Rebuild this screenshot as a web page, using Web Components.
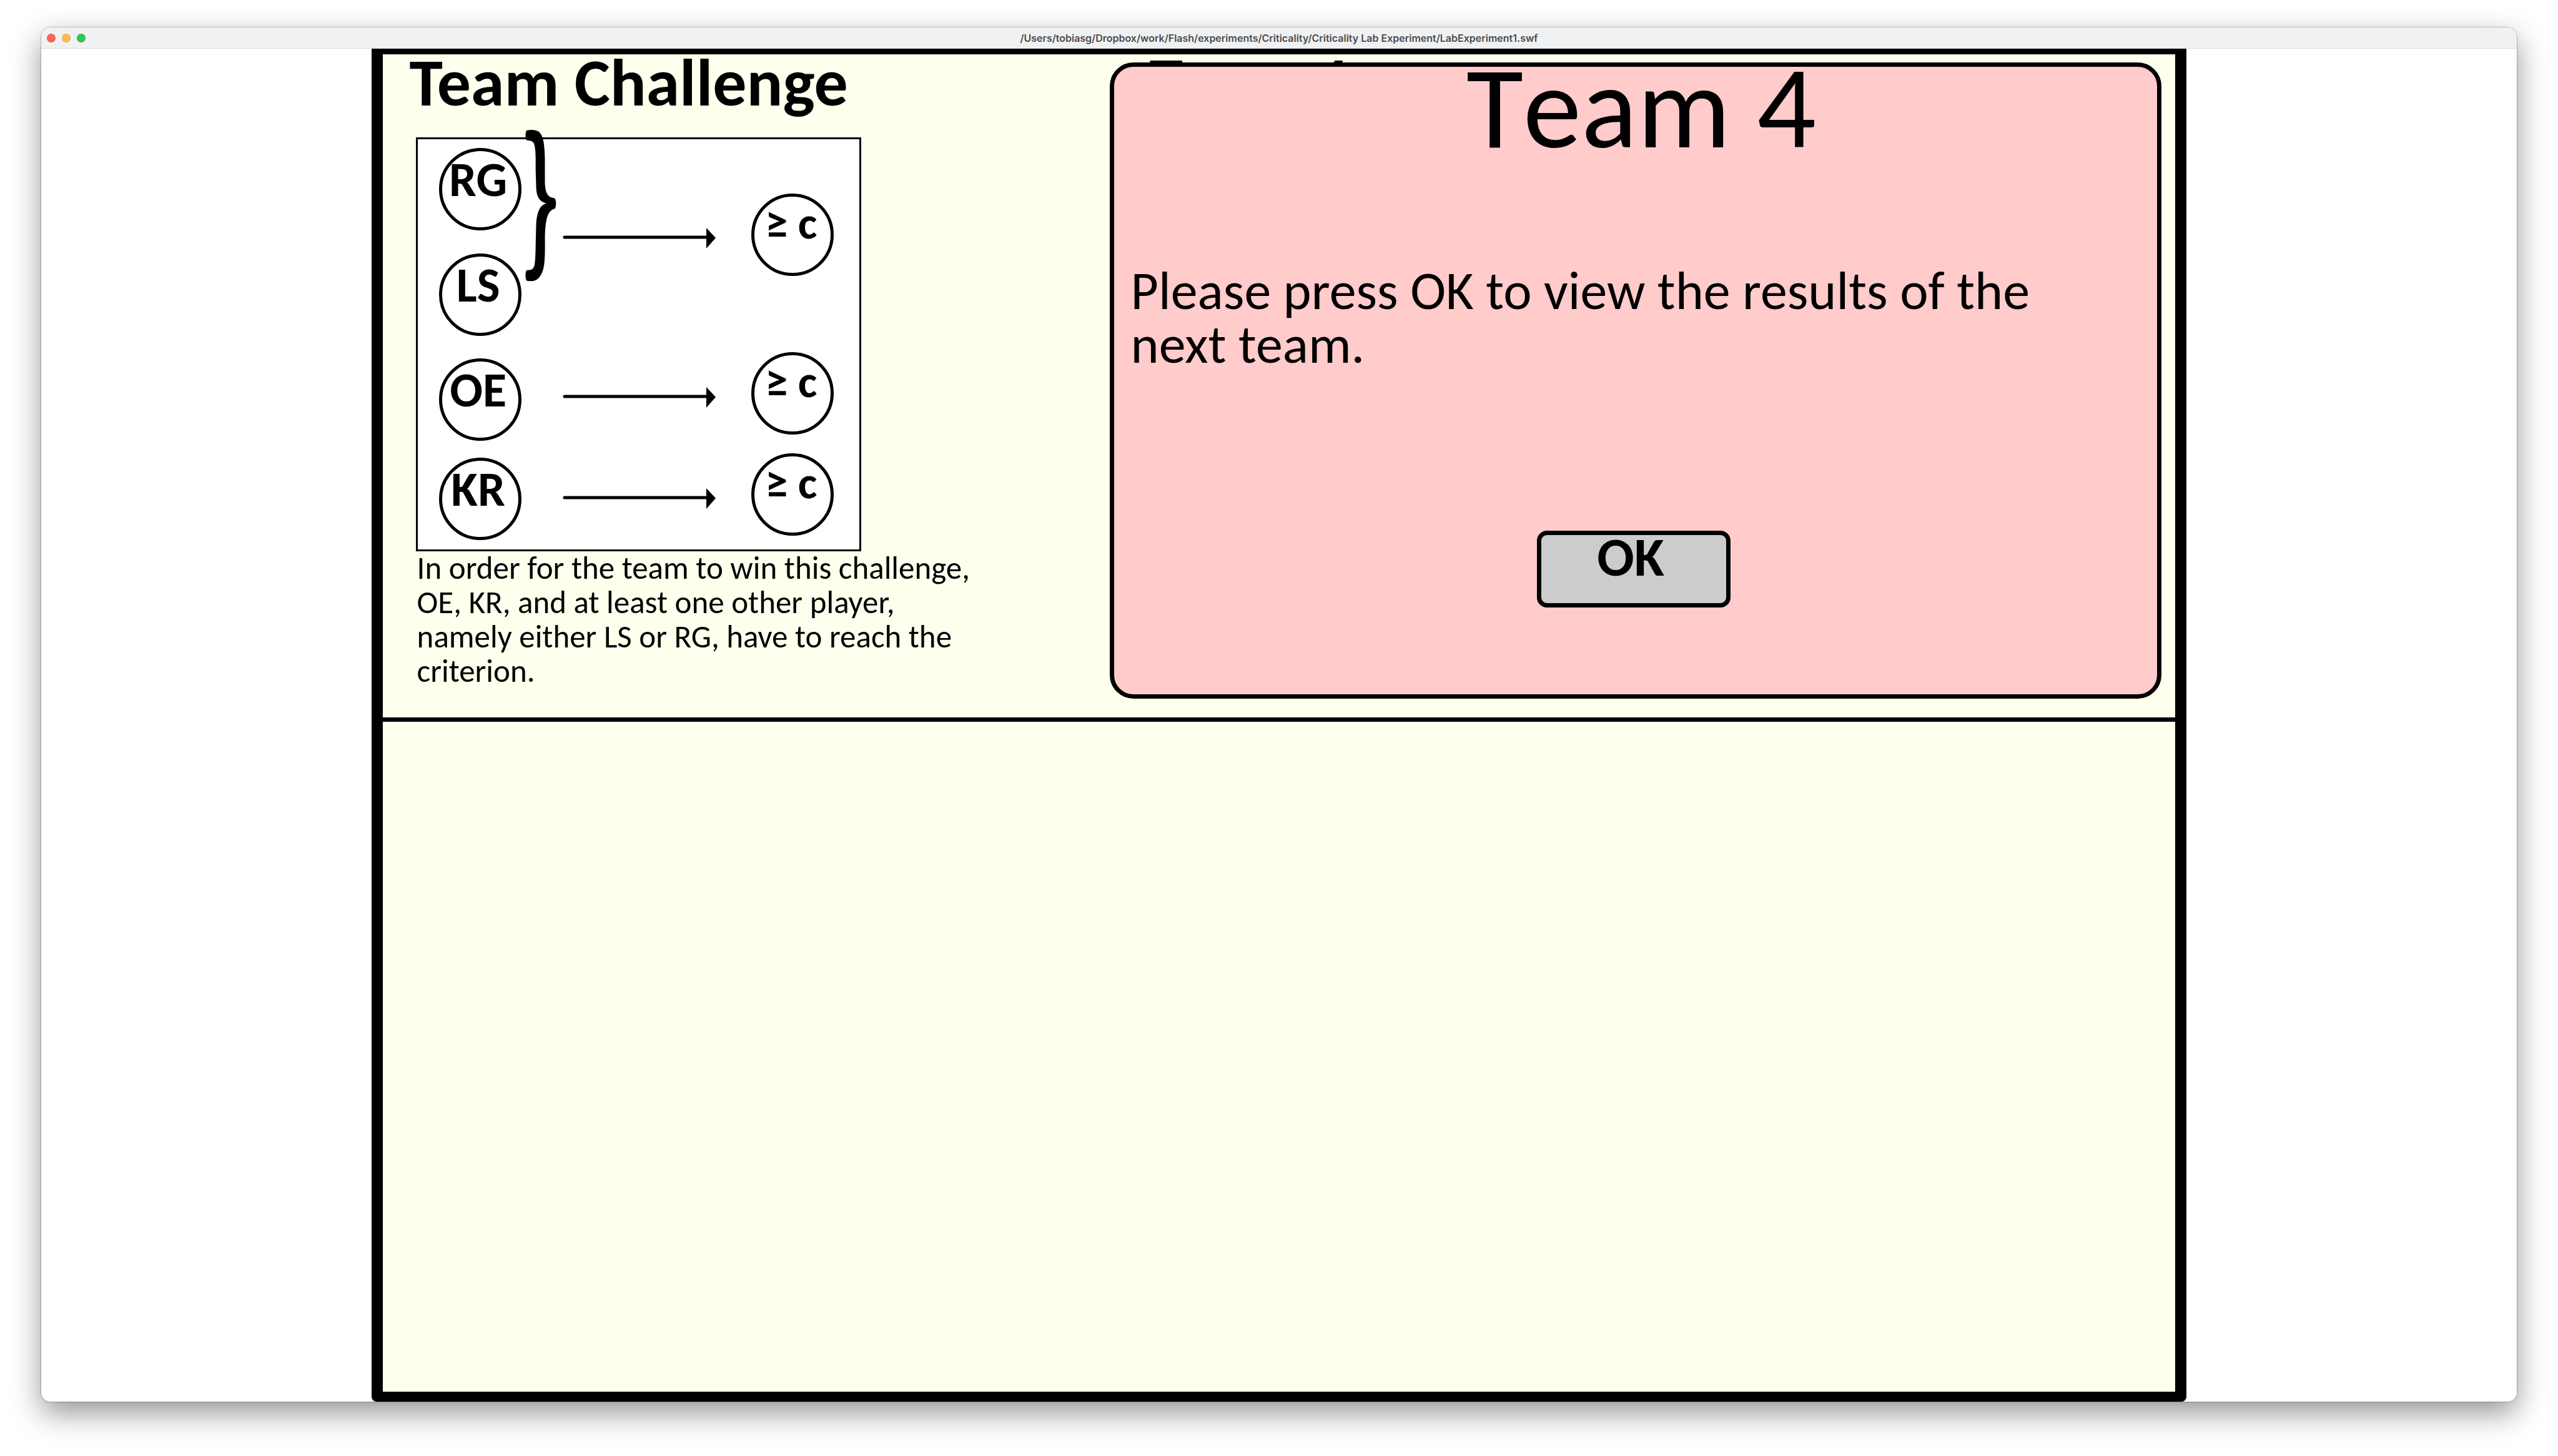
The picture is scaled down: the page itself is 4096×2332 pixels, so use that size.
<!DOCTYPE html>
<html lang="en">
<head>
<meta charset="utf-8">
<title>LabExperiment1.swf</title>
<style>
  body { margin: 0; background: #fff; color: #000; font-family: Calibri, Carlito, Lato, sans-serif; }
</style>
</head>
<body>

<player-window path="/Users/tobiasg/Dropbox/work/Flash/experiments/Criticality/Criticality Lab Experiment/LabExperiment1.swf">
  <experiment-stage>
    <challenge-panel slot="challenge" heading="Team Challenge">
      <challenge-diagram slot="diagram"></challenge-diagram>
      In order for the team to win this challenge, OE, KR, and at least one other player, namely either LS or RG, have to reach the criterion.
    </challenge-panel>
    <team-panel slot="team" heading="Team 4">
      <team-dialog heading="Team 4" action="OK">Please press OK to view the results of the next team.</team-dialog>
    </team-panel>
  </experiment-stage>
</player-window>

<script>
class BaseElement extends HTMLElement {
  connectedCallback() {
    if (this.shadowRoot) return;
    this.attachShadow({ mode: 'open' }).innerHTML = this.render();
  }
  attr(name) { return this.getAttribute(name) || ''; }
}

customElements.define('player-window', class extends BaseElement {
  render() {
    return `
      <style>
        :host { display: flex; box-sizing: border-box; min-height: 100vh; padding: 44px 66px 87px; }
        .frame { flex: 1; display: flex; flex-direction: column; overflow: hidden; border-radius: 15px; background: #fff; }
        .shadow { flex: 1; display: flex; border-radius: 15px;
          box-shadow: 0 0 1px 1px rgba(0,0,0,.22), 0 18px 48px rgba(0,0,0,.42); }
        header { display: grid; grid-template-columns: 1fr auto 1fr; align-items: center; box-sizing: border-box;
          height: 34px; padding: 0 9px; background: #f0f1f3; border-bottom: 1px solid #dcdddf; }
        .lights { display: flex; gap: 10px; }
        .lights i { box-sizing: border-box; width: 14px; height: 14px; border-radius: 50%; border: 1px solid rgba(0,0,0,.1); }
        .close { background: #ff625b; } .min { background: #ffbd4a; } .max { background: #32c852; }
        h1 { margin: 0; font: 600 16px/20px Inter, "Liberation Sans", sans-serif; color: #4b4b4c; white-space: nowrap; }
        main { flex: 1; display: flex; justify-content: center; }
      </style>
      <div class="shadow"><div class="frame">
        <header>
          <div class="lights"><i class="close"></i><i class="min"></i><i class="max"></i></div>
          <h1>${this.attr('path')}</h1>
        </header>
        <main><slot></slot></main>
      </div></div>`;
  }
});

customElements.define('experiment-stage', class extends BaseElement {
  render() {
    return `
      <style>
        :host { display: flex; flex-direction: column; box-sizing: border-box; width: 73.33%;
          border: solid #000; border-width: 9px 18px 16px; border-radius: 0 0 8px 8px; background: #ffffed; }
        .top { display: grid; grid-template-columns: 1164px 1fr; padding: 0 22px 30px 0; border-bottom: 7px solid #000; }
        .rest { flex: 1; }
      </style>
      <section class="top"><slot name="challenge"></slot><slot name="team"></slot></section>
      <section class="rest"></section>`;
  }
});

customElements.define('challenge-panel', class extends BaseElement {
  render() {
    return `
      <style>
        :host { display: block; padding-left: 43px; }
        h2 { margin: 0 0 43px; font-size: 108px; line-height: 90px; font-weight: 700; }
        .body { padding-left: 10px; }
        p { margin: -1px 0 0; padding-left: 2px; width: 900px; font-size: 51px; line-height: 55px; }
      </style>
      <h2>${this.attr('heading')}</h2>
      <div class="body">
        <slot name="diagram"></slot>
        <p><slot></slot></p>
      </div>`;
  }
});

customElements.define('player-node', class extends BaseElement {
  render() {
    return `
      <style>
        :host { display: block; box-sizing: border-box; width: 132px; height: 132px; padding-right: 6px;
          border: 5px solid #000; border-radius: 50%; text-align: center; white-space: nowrap;
          font-size: 78px; line-height: 92px; font-weight: 700; }
        :host([criterion]) { padding-right: 4px; font-size: 73px; line-height: 85px; }
      </style>
      <slot></slot>`;
  }
});

customElements.define('challenge-diagram', class extends BaseElement {
  render() {
    const players = [['RG', 14], ['LS', 183], ['OE', 351], ['KR', 510]];
    const goals = [87, 341, 503];
    const arrows = [158, 413, 575];
    return `
      <style>
        :host { display: block; position: relative; box-sizing: border-box; width: 713px; height: 663px;
          border: 3px solid #000; background: #fff; }
        player-node, svg { position: absolute; }
        .player { left: 34px; }
        .goal { left: 534px; }
        svg { left: 0; top: 0; width: 100%; height: 100%; overflow: visible; }
      </style>
      <svg viewBox="1 1 707 657" aria-hidden="true">
        ${arrows.map(y => `<path d="M236 ${y}H465" stroke="#000" stroke-width="5" stroke-linecap="round"/>
        <path d="M463 ${y - 15}L478 ${y + 1}L463 ${y + 18}Z"/>`).join('')}
        <!-- bracket that joins the two interchangeable players -->
        <path d="M175 -13C183 -15 190 -14 195 -11Q199 -7 201 -1Q204 9 204.500 32V70C205 85 208 91 214 94L220 95.500C223 98 223 110 220 112.500C210 115 205 126 204.600 160V179Q204.500 198 202 209C198 222 192 228 183 228.300Q178 228.500 175 227.500C173 224 173 214 175 211L181 210.300Q186 209.500 187.500 204Q189.500 196 189.700 169L190.600 136C192 115 198 106 206.600 104C195 100 191.500 93 190.600 80L189.700 51V32Q189.500 14 187 8Q185.500 4 181 3.500L175 2.500C173 0 173 -9 175 -13Z"/>
      </svg>
      ${players.map(([n, y]) => `<player-node class="player" style="top:${y}px">${n}</player-node>`).join('')}
      ${goals.map(y => `<player-node class="goal" criterion style="top:${y}px">≥ c</player-node>`).join('')}`;
  }
});

customElements.define('team-panel', class extends BaseElement {
  render() {
    return `
      <style>
        :host { display: block; position: relative; padding-top: 13px; }
        h2 { position: absolute; left: 64px; top: -2px; margin: 0; font-size: 108px; line-height: 90px; font-weight: 700; }
        .over { position: relative; }
      </style>
      <h2>${this.attr('heading')}</h2>
      <div class="over"><slot></slot></div>`;
  }
});

customElements.define('team-dialog', class extends BaseElement {
  render() {
    return `
      <style>
        :host { display: flex; flex-direction: column; align-items: center; padding-bottom: 139px;
          border: 7px solid #000; border-radius: 38px; background: #ffcbcb; }
        .text { align-self: stretch; padding: 0 9px 0 27px; }
        h2 { margin: 0; font-size: 187px; line-height: 130px; font-weight: 400; font-kerning: none; text-align: center; }
        p { margin: 186px 0 255px; max-width: 1500px; font-size: 86px; line-height: 86px; }
        button { display: flex; justify-content: center; align-items: flex-start; box-sizing: border-box;
          width: 310px; height: 123px; margin-right: 6px; padding: 0 10px 0 0; border: 7px solid #000; border-radius: 16px;
          background: #ccc; color: #000; font: inherit; font-size: 88px; line-height: 70px; font-weight: 700; }
      </style>
      <div class="text">
        <h2>${this.attr('heading')}</h2>
        <p><slot></slot></p>
      </div>
      <button type="button">${this.attr('action')}</button>`;
  }
});
</script>
</body>
</html>
